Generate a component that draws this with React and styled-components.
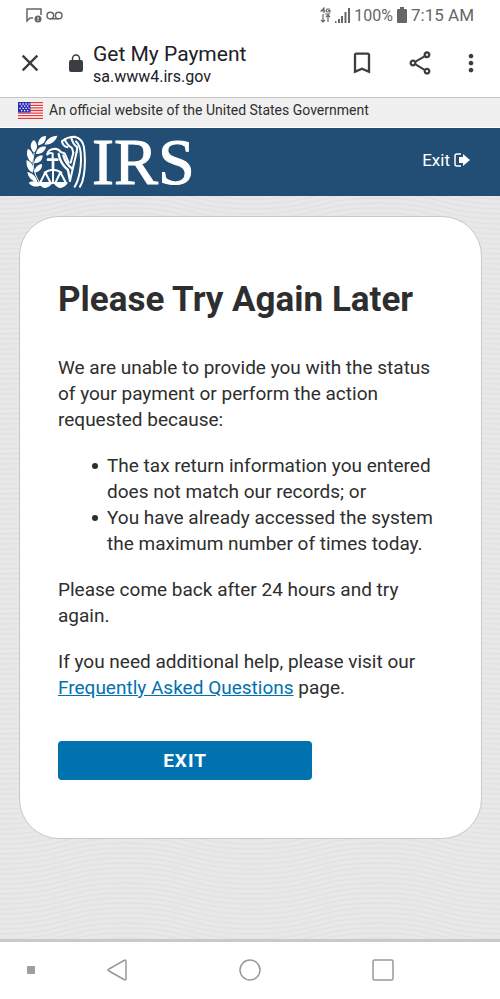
import React from 'react'
import styled, { createGlobalStyle } from 'styled-components'
import {
  MdBookmarkBorder,
  MdClose,
  MdMoreVert,
  MdOutlineShare
} from 'react-icons/md'

// fine wavy lines behind the card, one tile of the pattern
const waves = [-20, -15, -10, -5, 0, 5, 10, 15, 20]
  .map(y => `M0 ${y + 8}C64 ${y + 8} 64 ${y - 8} 126 ${y - 8}S188 ${y + 8} 252 ${y + 8}`)
  .join('')

const waveTile = encodeURIComponent(
  `<svg xmlns="http://www.w3.org/2000/svg" width="252" height="5"><path d="${waves}" fill="none" stroke="#e1e1e1" stroke-width="1.3"/></svg>`
)

const GlobalStyle = createGlobalStyle`
  * {
    box-sizing: border-box;
  }

  body {
    margin: 0;
    background: #fff;
    color: #2e2e2e;
    font-family: Roboto, 'Liberation Sans', sans-serif;
  }
`

const Screen = styled.div`
  display: flex;
  flex-direction: column;
  min-height: 100vh;
`

const StatusBar = styled.div`
  display: flex;
  align-items: center;
  justify-content: space-between;
  height: 30px;
  padding: 0 26px;
  color: #666;
  font-size: 16px;
`

const StatusGroup = styled.div`
  display: flex;
  align-items: center;
  gap: 4px;
`

const Clock = styled.span`
  font-size: 17px;
`

const BrowserBar = styled.div`
  display: flex;
  align-items: center;
  height: 68px;
  padding: 0 22px 2px 16px;
  border-bottom: 1px solid #c4c4c4;
  color: #3a3e42;
`

const IconButton = styled.button`
  display: flex;
  justify-content: center;
  width: ${props => (props.$narrow ? '14px' : 'auto')};
  padding: 0;
  border: 0;
  background: none;
  color: inherit;
  font-size: 28px;

  svg {
    flex: none;
  }
`

const SiteInfo = styled.div`
  display: flex;
  flex: 1;
  align-items: center;
  gap: 10px;
  padding-left: 25px;
`

const SiteTitle = styled.div`
  padding-top: 2px;
  color: #202124;
  font-size: 21px;
  line-height: 26px;
`

const SiteHost = styled.div`
  color: #202124;
  font-size: 16px;
  line-height: 20px;
`

const Actions = styled.div`
  display: flex;
  align-items: center;
  gap: 30px;
`

const GovBanner = styled.div`
  display: flex;
  align-items: center;
  gap: 6px;
  height: 30px;
  padding: 0 18px 5px;
  border-bottom: 1px solid #fff;
  background: #f0f0f0;
  font-size: 14px;
`

const Header = styled.header`
  display: flex;
  align-items: center;
  justify-content: space-between;
  height: 68px;
  padding: 0 30px 0 26px;
  background: #224e75;
  color: #fff;
`

const Logo = styled.a`
  display: flex;
  align-items: center;
  gap: 6px;
  color: #fff;
  font-family: 'Liberation Serif', serif;
  font-size: 66px;
  line-height: 68px;
  text-decoration: none;
  -webkit-text-stroke: 1px #fff;
`

const ExitLink = styled.a`
  display: flex;
  align-items: center;
  gap: 4px;
  padding-bottom: 5px;
  color: #fff;
  font-size: 17px;
  text-decoration: none;
`

const Main = styled.main`
  flex: 1;
  padding: 20px 18px 40px 19px;
  border-bottom: 3px solid #c9c9c9;
  background: #e8e8e8 url("data:image/svg+xml,${waveTile}");
`

const Card = styled.section`
  padding: 61px 38px 58px;
  border: 1px solid #c8c8c8;
  border-radius: 40px;
  background: #fff;
  font-size: 19px;
  line-height: 26px;
`

const Title = styled.h1`
  margin: 0 0 33px;
  font-size: 35px;
  line-height: 44px;
`

const Text = styled.p`
  margin: 0 0 20px;
`

const Reasons = styled.ul`
  margin: 0 0 20px;
  padding-left: 49px;
  list-style: none;
`

const Reason = styled.li`
  &::before {
    content: '';
    display: inline-block;
    width: 6px;
    height: 6px;
    margin: 0 9px 3px -15px;
    border-radius: 50%;
    background: #2e2e2e;
  }
`

const FaqLink = styled.a`
  color: #0071b0;
`

const ExitButton = styled.button`
  display: block;
  width: 66%;
  height: 39px;
  margin-top: 40px;
  padding: 0;
  border: 0;
  border-radius: 4px;
  background: #0072b0;
  color: #fff;
  font-family: inherit;
  font-size: 19px;
  font-weight: 700;
  letter-spacing: 1px;
`

const NavBar = styled.nav`
  display: flex;
  align-items: center;
  justify-content: space-between;
  height: 57px;
  padding: 0 106px 2px 27px;
  color: #999;
`

const NavDot = styled.span`
  width: 8px;
  height: 8px;
  border-radius: 1px;
  background: #9e9e9e;
`

const NavButtons = styled.div`
  display: flex;
  flex: 1;
  justify-content: space-between;
  padding-left: 71px;
`

const MessageIcon = () => (
  <svg width="16" height="15" viewBox="0 0 16 15" fill="none" stroke="#666">
    <path d="M7 10H4l-3 3V1h14v6" strokeWidth="1.5" />
    <circle cx="12" cy="11" r="3.5" fill="#666" stroke="none" />
    <path d="M12 9v2.500M12 12v1" stroke="#fff" />
  </svg>
)

const VoicemailIcon = () => (
  <svg width="17" height="9" viewBox="0 0 17 9" fill="none" stroke="#666" strokeWidth="1.5">
    <circle cx="4.300" cy="4.500" r="3.300" />
    <circle cx="12.700" cy="4.500" r="3.300" />
    <path d="M4 7.800h9" />
  </svg>
)

const NetworkIcon = () => (
  <svg width="11" height="16" viewBox="0 0 11 16" fill="none" stroke="#666">
    <path d="M4 6V1L1 4h4M10 2H7L6 4l1 1h3V3.500H8" strokeWidth="1.200" />
    <path d="M3 7v8M1 13l2 2 2-2M8 15V7M6 10l2-2 2 2M5 7h5" strokeWidth="1.200" />
  </svg>
)

const SignalIcon = () => (
  <svg width="15" height="15" viewBox="0 0 15 15" fill="#666">
    <path d="M0 13h1.500v2H0zM3 11h2v4H3zM6 8h2v7H6zM9.500 4h2v11h-2zM13 0h2v15h-2z" />
  </svg>
)

const BatteryIcon = () => (
  <svg width="10" height="16" viewBox="0 0 10 16" fill="#666">
    <path d="M3 0h4v2h2q1 0 1 1v12q0 1-1 1H1q-1 0-1-1V3q0-1 1-1h2z" />
  </svg>
)

const LockIcon = () => (
  <svg width="14" height="18" viewBox="0 0 14 18">
    <rect y="6" width="14" height="12" rx="2" fill="currentColor" />
    <path d="M3.500 7V4.500a3.500 3.500 0 0 1 7 0V7" fill="none" stroke="currentColor" strokeWidth="1.500" />
  </svg>
)

const FlagIcon = () => (
  <svg width="25" height="17" viewBox="0 0 25 17">
    <path fill="#fff" d="M0 0h25v17H0z" />
    <path
      stroke="#e5383b"
      strokeWidth="1.300"
      d="M0 .7h25M0 3.300h25M0 5.900h25M0 8.500h25M0 11.100h25M0 13.700h25M0 16.300h25"
    />
    <path fill="#2b2fb5" d="M0 0h12.500v10.500H0z" />
    <path
      stroke="#fff"
      strokeWidth="1.300"
      strokeDasharray="1.300 1.700"
      d="M1.500 2h10M3 4.200h8M1.500 6.400h10M3 8.600h8"
    />
  </svg>
)

const leaves = [
  'M62 38C66 22 82 12 100 11C96 28 80 38 62 38Z',
  'M42 40C42 22 52 12 66 12C66 28 58 38 42 40Z',
  'M30 62C16 48 18 32 30 24C42 36 42 50 30 62Z',
  'M36 66C38 50 50 42 66 44C64 58 52 66 36 66Z',
  'M24 92C8 80 6 62 12 50C28 60 32 76 24 92Z',
  'M30 94C32 78 42 70 56 70C56 86 46 94 30 94Z',
  'M26 122C10 114 6 98 8 84C24 90 32 106 26 122Z',
  'M32 122C32 106 40 98 54 96C56 110 46 120 32 122Z',
  'M40 150C22 148 12 134 10 120C28 124 38 136 40 150Z',
  'M52 158C40 168 22 164 14 152C28 144 44 148 52 158Z'
]

// laurel, scales and eagle
const Emblem = () => (
  <svg
    width="60"
    height="54"
    viewBox="6 9 180 162"
    fill="none"
    stroke="#fff"
    strokeWidth="6"
    strokeLinecap="round"
    strokeLinejoin="round"
  >
    <path d={leaves.join('')} fill="#fff" stroke="none" />
    <path d="M30 64Q18 104 46 152" strokeWidth="3" />
    <path d="M70 67Q72 51 94 50Q106 52 110 60L122 64L134 92" />
    <path d="M70 67Q76 61 86 64V82" />
    <path d="M72 83H100M87 84V114" strokeWidth="8" />
    <path d="M62 122Q87 104 112 122M87 114V154" />
    <path d="M64 121L48 153H80ZM109 121L94 153H126Z" />
    <path d="M46 153Q63 177 82 153ZM92 153Q109 177 128 153Z" fill="#fff" />
    <path d="M114 28Q130 14 152 14Q176 20 180 46Q186 92 179 132Q176 152 168 164" />
    <path d="M114 28Q116 42 130 46M122 22Q128 38 144 48L148 62M142 18Q146 36 160 46L158 60" />
    <path d="M156 28Q168 40 170 62Q174 104 162 142Q158 154 152 164" />
    <path d="M104 66Q108 94 132 114L138 146M118 70Q124 94 144 110" strokeWidth="7" />
    <path d="M158 60L138 146M148 62L140 92" />
  </svg>
)

const LogoutIcon = () => (
  <svg width="16" height="14" viewBox="0 0 16 14">
    <path
      d="M7 1H3Q1 1 1 3v8q0 2 2 2h4"
      fill="none"
      stroke="#fff"
      strokeWidth="1.500"
    />
    <path d="M5 4h4V1l7 6-7 6v-3H5z" fill="#fff" />
  </svg>
)

const NavIcon = ({ children }) => (
  <svg
    width="22"
    height="22"
    viewBox="0 0 22 22"
    fill="none"
    stroke="#999"
    strokeWidth="1.500"
    strokeLinejoin="round"
  >
    {children}
  </svg>
)

const App = () => (
  <>
    <GlobalStyle />
    <Screen>
      <StatusBar>
        <StatusGroup>
          <MessageIcon />
          <VoicemailIcon />
        </StatusGroup>
        <StatusGroup>
          <NetworkIcon />
          <SignalIcon />
          <span>100%</span>
          <BatteryIcon />
          <Clock>7:15 AM</Clock>
        </StatusGroup>
      </StatusBar>
      <BrowserBar>
        <IconButton aria-label="Close">
          <MdClose />
        </IconButton>
        <SiteInfo>
          <LockIcon />
          <div>
            <SiteTitle>Get My Payment</SiteTitle>
            <SiteHost>sa.www4.irs.gov</SiteHost>
          </div>
        </SiteInfo>
        <Actions>
          <IconButton aria-label="Bookmark">
            <MdBookmarkBorder />
          </IconButton>
          <IconButton aria-label="Share">
            <MdOutlineShare />
          </IconButton>
          <IconButton aria-label="More" $narrow>
            <MdMoreVert />
          </IconButton>
        </Actions>
      </BrowserBar>
      <GovBanner>
        <FlagIcon />
        An official website of the United States Government
      </GovBanner>
      <Header>
        <Logo href="#">
          <Emblem />
          IRS
        </Logo>
        <ExitLink href="#">
          Exit
          <LogoutIcon />
        </ExitLink>
      </Header>
      <Main>
        <Card>
          <Title>Please Try Again Later</Title>
          <Text>
            We are unable to provide you with the status of your payment or
            perform the action requested because:
          </Text>
          <Reasons>
            <Reason>
              The tax return information you entered does not match our
              records; or
            </Reason>
            <Reason>
              You have already accessed the system the maximum number of times
              today.
            </Reason>
          </Reasons>
          <Text>Please come back after 24 hours and try again.</Text>
          <Text>
            If you need additional help, please visit our{' '}
            <FaqLink href="#">Frequently Asked Questions</FaqLink> page.
          </Text>
          <ExitButton>EXIT</ExitButton>
        </Card>
      </Main>
      <NavBar>
        <NavDot />
        <NavButtons>
          <IconButton aria-label="Back">
            <NavIcon>
              <path d="M18 1.500Q20 .5 20 2v18q0 1.500-2 .5L3 12q-2-1 0-2z" />
            </NavIcon>
          </IconButton>
          <IconButton aria-label="Home">
            <NavIcon>
              <circle cx="11" cy="11" r="10" />
            </NavIcon>
          </IconButton>
          <IconButton aria-label="Recent apps">
            <NavIcon>
              <rect x="1" y="1" width="20" height="20" rx="1.500" />
            </NavIcon>
          </IconButton>
        </NavButtons>
      </NavBar>
    </Screen>
  </>
)

export default App
